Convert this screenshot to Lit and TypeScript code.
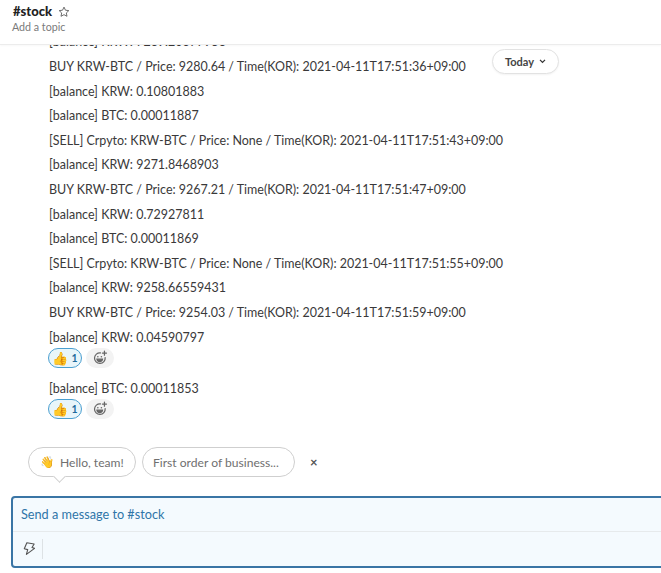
import { LitElement, html, css, svg } from "lit";
import { customElement } from "lit/decorators.js";

const lines = [
  "[balance] KRW: 7289.20377958",
  "BUY KRW-BTC / Price: 9280.64 / Time(KOR): 2021-04-11T17:51:36+09:00",
  "[balance] KRW: 0.10801883",
  "[balance] BTC: 0.00011887",
  "[SELL] Crpyto: KRW-BTC / Price: None / Time(KOR): 2021-04-11T17:51:43+09:00",
  "[balance] KRW: 9271.8468903",
  "BUY KRW-BTC / Price: 9267.21 / Time(KOR): 2021-04-11T17:51:47+09:00",
  "[balance] KRW: 0.72927811",
  "[balance] BTC: 0.00011869",
  "[SELL] Crpyto: KRW-BTC / Price: None / Time(KOR): 2021-04-11T17:51:55+09:00",
  "[balance] KRW: 9258.66559431",
  "BUY KRW-BTC / Price: 9254.03 / Time(KOR): 2021-04-11T17:51:59+09:00",
];

const addIcon = svg`<svg viewBox="0 0 18 18" width="16" height="16" fill="none" stroke="#666" stroke-width="1.4" stroke-linecap="round"><path d="M9.5 3.2A6 6 0 1 0 14.8 8.5"/><circle cx="6.6" cy="7.6" r=".9" fill="#666" stroke="none"/><circle cx="10.6" cy="7.6" r=".9" fill="#666" stroke="none"/><path d="M5.6 10.4h6.2c-.4 1.8-1.6 2.6-3.1 2.6s-2.7-.8-3.1-2.6z" fill="#666"/><path d="M14 1.2v4.6M11.7 3.5h4.6"/></svg>`;

@customElement("app-root")
export class AppRoot extends LitElement {
  static styles = css`
    :host {
      display: flex;
      flex-direction: column;
      width: 661px;
      height: 573px;
      background: #fff;
      font-family: Lato, "Liberation Sans", sans-serif;
      color: #1d1c1d;
      overflow: hidden;
    }
    header {
      height: 45px;
      box-sizing: border-box;
      flex: none;
      padding: 3px 13px 0;
      border-bottom: 1px solid #ececec;
      box-shadow: 0 1px 2px rgba(0, 0, 0, 0.03);
      position: relative;
      z-index: 1;
      background: #fff;
    }
    .title {
      display: flex;
      align-items: center;
      gap: 6px;
      height: 17px;
      font-size: 13px;
      font-weight: 900;
      line-height: 17px;
      color: #222;
    }
    .topic {
      font-size: 10.7px;
      color: #7a7a7a;
      line-height: 15px;
      margin: -1px 0 0 -1px;
    }
    .messages {
      flex: none;
      height: 377px;
      position: relative;
      overflow: hidden;
      padding-left: 49px;
    }
    .scroll {
      margin-top: -14.6px;
    }
    .line {
      font-size: 12.47px;
      line-height: 24.6px;
      height: 24.6px;
      color: #3a393a;
      white-space: nowrap;
    }
    .reacts {
      display: flex;
      gap: 4px;
      height: 20px;
      margin: -2px 0 8.4px -1px;
    }
    .pill {
      width: 34px;
      height: 20px;
      box-sizing: border-box;
      border: 1.5px solid #4a9fd0;
      background: #e8f5fa;
      border-radius: 10px;
      display: flex;
      align-items: center;
      justify-content: center;
      gap: 3px;
      font-size: 10.5px;
      font-weight: 700;
      color: #1d6a9c;
    }
    .pill .emoji { font-size: 13px; line-height: 1; }
    .add {
      width: 28px;
      height: 20px;
      background: #f3f3f3;
      border-radius: 10px;
      display: flex;
      align-items: center;
      justify-content: center;
    }
    .today {
      position: absolute;
      left: 492px;
      top: 4px;
      width: 67px;
      height: 25px;
      box-sizing: border-box;
      border: 1px solid #e2e2e2;
      border-radius: 13px;
      background: #fff;
      box-shadow: 0 1px 2px rgba(0, 0, 0, 0.05);
      display: flex;
      align-items: center;
      justify-content: center;
      gap: 5px;
      font-size: 11px;
      font-weight: 700;
      color: #444;
    }
    .prompts {
      flex: none;
      height: 74px;
      box-sizing: border-box;
      padding: 25px 0 0 28px;
      display: flex;
      align-items: flex-start;
      gap: 6px;
    }
    .bubble {
      height: 30px;
      box-sizing: border-box;
      border: 1px solid #cfcfcf;
      border-radius: 15px;
      display: flex;
      align-items: center;
      font-size: 12.1px;
      color: #6f6f6f;
      background: #fff;
      position: relative;
      white-space: nowrap;
    }
    .b1 { width: 108px; padding-left: 11px; gap: 6px; }
    .b2 { width: 153px; padding-left: 10px; }
    .b1::after {
      content: "";
      position: absolute;
      left: 26px;
      bottom: -5px;
      width: 8px;
      height: 8px;
      background: #fff;
      border-right: 1px solid #cfcfcf;
      border-bottom: 1px solid #cfcfcf;
      transform: rotate(45deg);
    }
    .wave { font-size: 11.5px; line-height: 1; }
    .close {
      font-size: 13px;
      color: #555;
      margin-left: 9px;
      line-height: 30px;
      font-weight: 700;
    }
    .composer {
      flex: none;
      margin-left: 11px;
      width: 670px;
      height: 72px;
      box-sizing: border-box;
      border: 2px solid #3a75a5;
      border-radius: 4px;
      background: #f4fafe;
      display: flex;
      flex-direction: column;
    }
    .input {
      height: 34px;
      box-sizing: border-box;
      padding: 0 8px;
      font-size: 12.7px;
      line-height: 32px;
      color: #2f75a8;
      border-bottom: 1px solid #e6eaec;
      flex: none;
    }
    .tools {
      flex: 1;
      display: flex;
      align-items: center;
      padding-left: 10px;
      gap: 7px;
    }
    .sep { width: 1px; height: 20px; background: #dde2e5; }
  `;

  render() {
    return html`
      <header>
        <div class="title">
          <span>#stock</span>
          <svg viewBox="0 0 14 14" width="12" height="12" fill="none" stroke="#555" stroke-width="1" stroke-linejoin="round"><path d="M7 1.3l1.7 3.6 3.9.5-2.9 2.7.8 3.9L7 10.1l-3.5 1.9.8-3.9L1.4 5.4l3.9-.5z"/></svg>
        </div>
        <div class="topic">Add a topic</div>
      </header>
      <div class="messages">
        <div class="scroll">
          ${lines.map((l) => html`<div class="line">${l}</div>`)}
          <div class="line">[balance] KRW: 0.04590797</div>
          ${this.reactions()}
          <div class="line">[balance] BTC: 0.00011853</div>
          ${this.reactions()}
        </div>
        <div class="today">
          <span>Today</span>
          <svg viewBox="0 0 8 6" width="7" height="5" fill="none" stroke="#333" stroke-width="1.5"><path d="M1 1l3 3 3-3"/></svg>
        </div>
      </div>
      <div class="prompts">
        <div class="bubble b1"><span class="wave">👋</span><span>Hello, team!</span></div>
        <div class="bubble b2">First order of business...</div>
        <span class="close">×</span>
      </div>
      <div class="composer">
        <div class="input">Send a message to #stock</div>
        <div class="tools">
          <svg viewBox="1 1 14 15.5" width="12" height="14" fill="none" stroke="#555" stroke-width="1.3" stroke-linejoin="round"><path d="M5.5 1.5l8.5 1.5-2.5 4 3 1-9.5 7 1.5-5.5-4-1z"/></svg>
          <span class="sep"></span>
        </div>
      </div>
    `;
  }

  private reactions() {
    return html`<div class="reacts">
      <div class="pill"><span class="emoji">👍</span><span>1</span></div>
      <div class="add">${addIcon}</div>
    </div>`;
  }
}
